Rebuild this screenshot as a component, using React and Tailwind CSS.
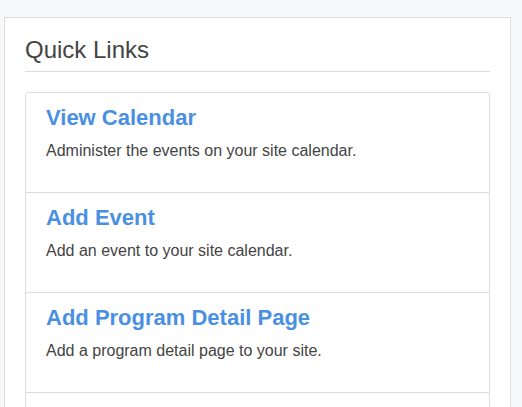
import React from "react";

const links = [
  { title: "View Calendar", text: "Administer the events on your site calendar." },
  { title: "Add Event", text: "Add an event to your site calendar." },
  { title: "Add Program Detail Page", text: "Add a program detail page to your site." },
];

const App = () => {
  return (
    <div className="min-h-screen bg-[#f7f8fa] pl-[4px] pt-[17px] font-['Liberation_Sans',Arial,sans-serif]">
      <div className="w-[507px] border border-[#dddddd] bg-white px-5 pt-[19px] pb-5">
        <h2 className="border-b border-[#dddddd] pb-[8px] text-[24px] leading-[26px] font-normal text-[#444444]">
          Quick Links
        </h2>

        <div className="mt-5 rounded-[3px] border border-[#dddddd]">
          {links.map((link) => (
            <div key={link.title} className="border-b border-[#dddddd] px-5 pt-[13px] pb-[29px]">
              <a href="#" className="block text-[22px] leading-6 font-bold text-[#4a90e2]">
                {link.title}
              </a>
              <p className="mt-[9px] text-base leading-6 text-[#444444]">{link.text}</p>
            </div>
          ))}
          <div className="h-[60px]" />
        </div>
      </div>
    </div>
  );
};

export default App;
